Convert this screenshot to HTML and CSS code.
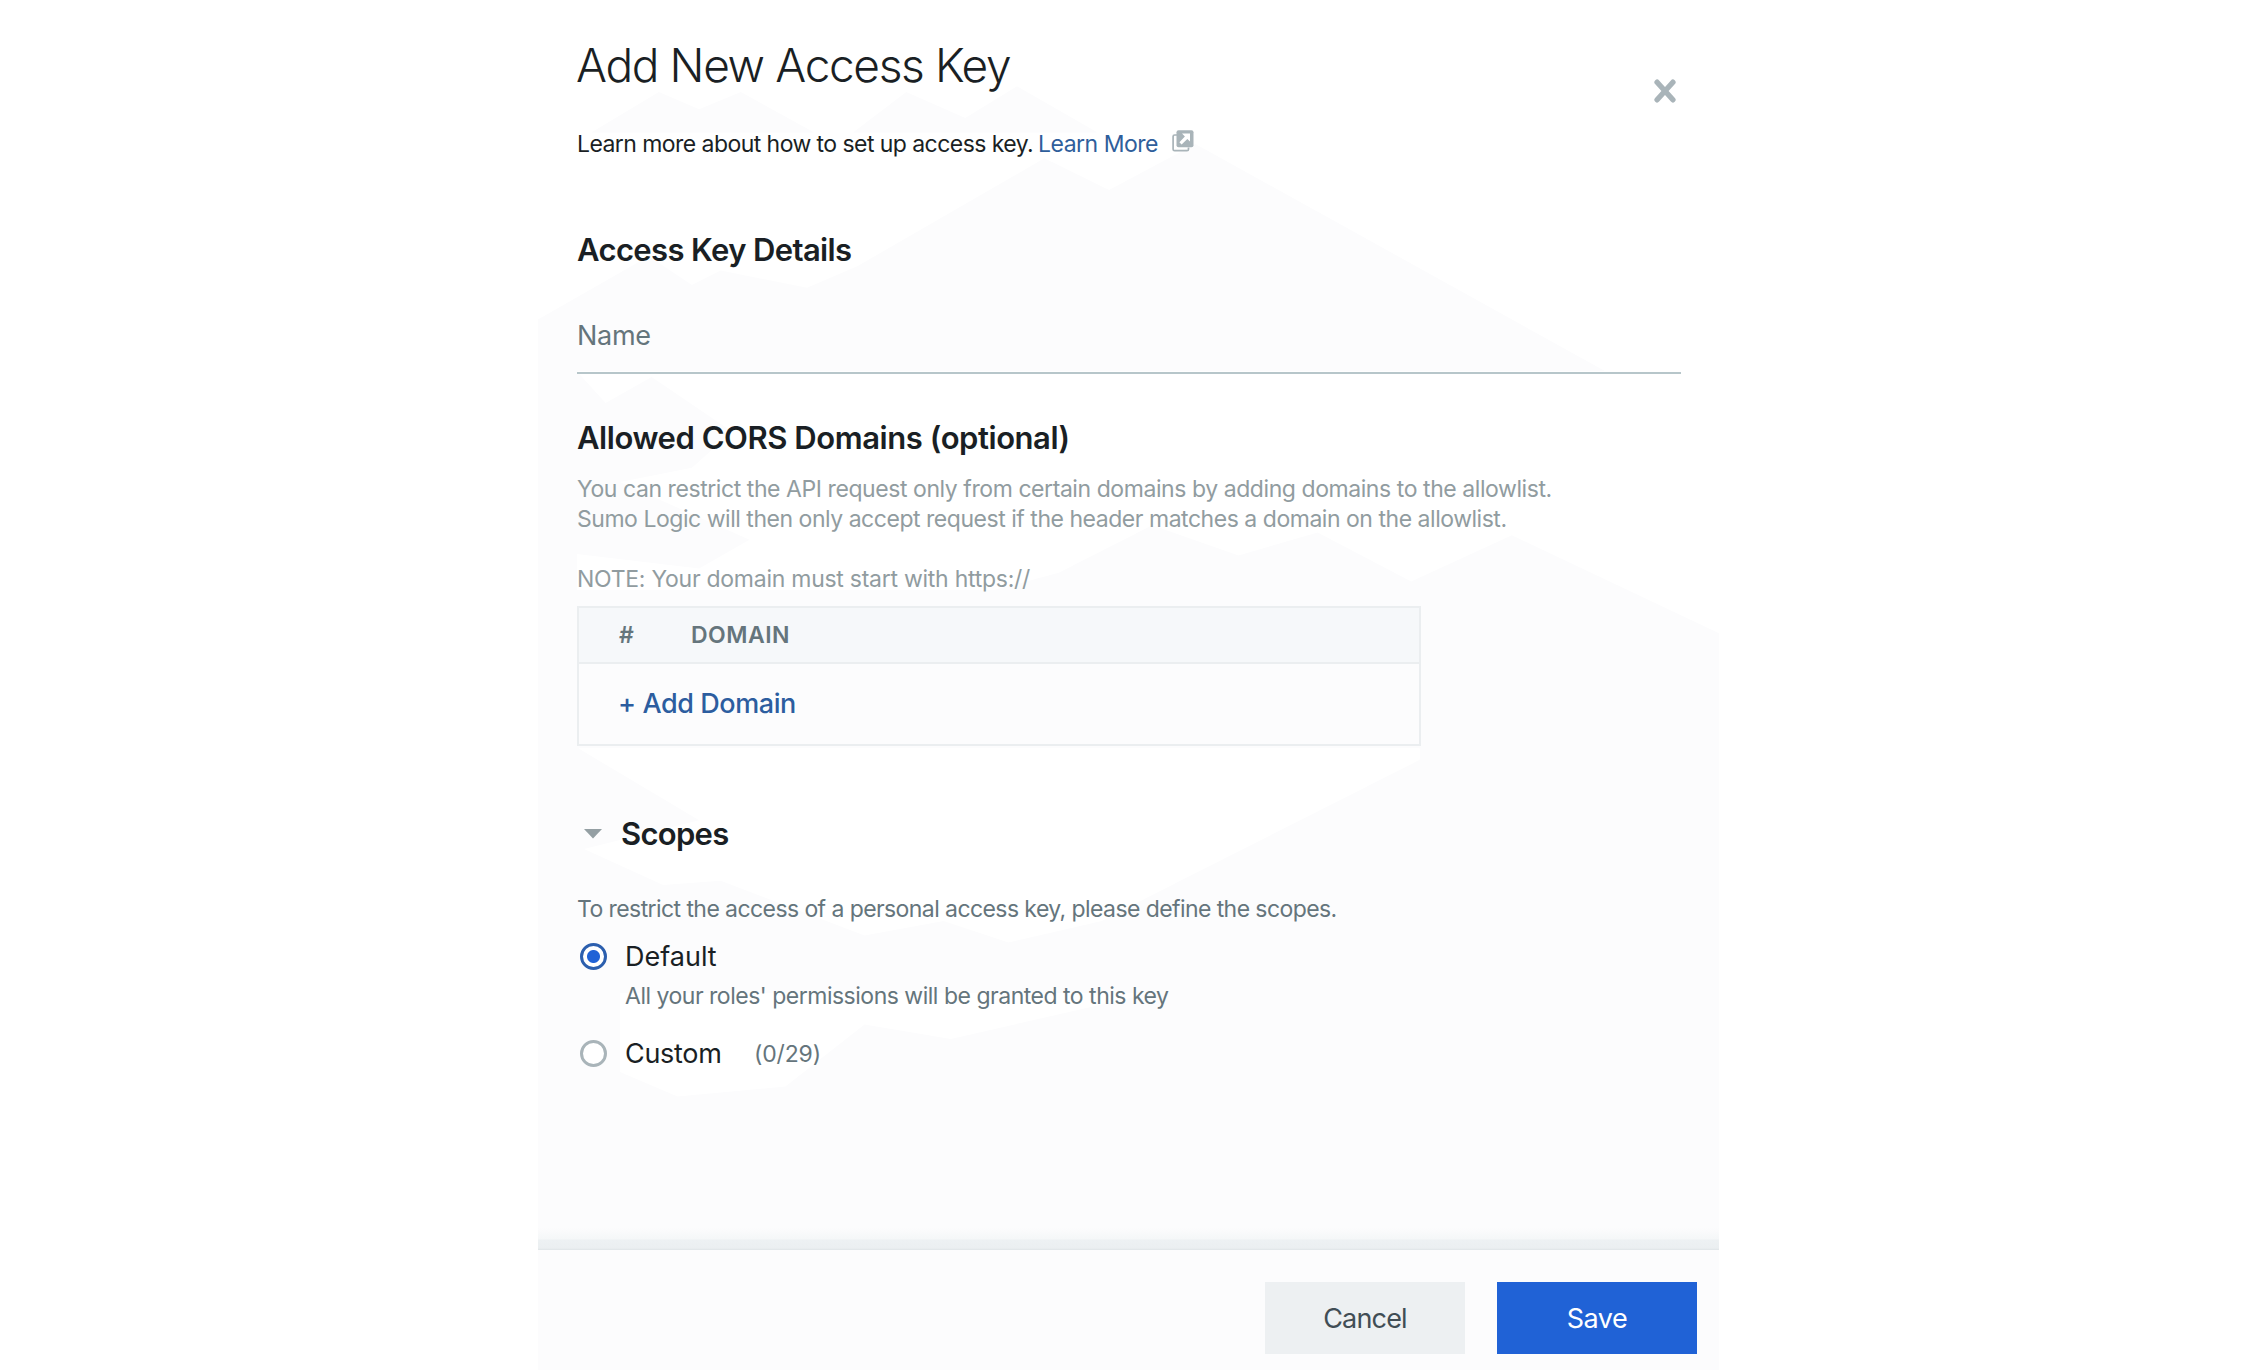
FILE: index.html
```html
<!DOCTYPE html>
<html lang="en">
<head>
<meta charset="utf-8">
<title>Add New Access Key</title>
<link rel="stylesheet" href="styles.css">
</head>
<body>
<main class="panel">
  <svg class="backdrop" viewBox="373 0 821 952" preserveAspectRatio="none" aria-hidden="true">
    <path fill="#fff" d="M373 0H1194V303L1115 258L830 100L770 132L725 110L595 185L560 200L500 188L480 198L450 178L373 222Z"/>
    <path fill="#fcfcfd" d="M410 92L457 64L485 76L514 64L565 92ZM592 92L629 64L670 82L706 60L762 92Z"/>
    <path fill="#fff" d="M400 258H1194V440L1050 372L980 404L915 370L860 386L800 365L735 398L690 410H400V385L485 395L520 375L430 335L480 325L508 300L452 262L420 280Z"/>
    <path fill="#fff" d="M401 520H986V528L800 622L765 640L700 655L655 640L600 650L500 612L460 615L405 590L485 570Z"/>
    <path fill="#fff" d="M430 690H800L660 722L600 712L545 755L470 762L430 745Z"/>
  </svg>

  <div class="content">
    <header class="head">
      <h1 class="title">Add New Access Key</h1>
      <button class="close" aria-label="Close">
        <svg width="22" height="24" viewBox="0 0 22 24"><path d="M3.1 3.2L18.9 20.8M18.9 3.2L3.1 20.8" fill="none" stroke="#a9b4b9" stroke-width="5.4" stroke-linecap="round"/></svg>
      </button>
    </header>

    <p class="intro"><span class="intro-text">Learn more about how to set up access key.</span><a class="learn">Learn More</a>
      <svg class="external" width="22" height="22" viewBox="0 0 22 22"><path d="M5 5H2.6Q1.1 5 1.1 6.5V19.2Q1.1 20.7 2.6 20.7H15Q16.5 20.7 16.5 19.2V17.5" fill="none" stroke="#a9b4b9" stroke-width="1.7"/><rect x="4.5" y=".3" width="17" height="17" rx="2" fill="#a9b4b9"/><path d="M10 3.6H18V11.6L15.3 8.9L9.6 14.4L7.4 12.2L12.9 6.5Z" fill="#fff"/></svg>
    </p>

    <h2 class="heading details">Access Key Details</h2>
    <div class="field">Name</div>

    <h2 class="heading cors">Allowed CORS Domains (optional)</h2>
    <div class="description">
      <p class="line-one">You can restrict the API request only from certain domains by adding domains to the allowlist.</p>
      <p class="line-two">Sumo Logic will then only accept request if the header matches a domain on the allowlist.</p>
      <p class="note">NOTE: Your domain must start with https://</p>
    </div>

    <div class="table">
      <div class="table-head"><span class="col-number">#</span><span class="col-domain">DOMAIN</span></div>
      <div class="table-body"><a class="add">+ Add Domain</a></div>
    </div>

    <div class="scopes">
      <svg class="caret" width="18" height="10" viewBox="0 0 18 10"><path d="M0 0H18L9 9.5Z" fill="#949fa3"/></svg>
      <h2 class="heading scopes-title">Scopes</h2>
    </div>
    <p class="scopes-text">To restrict the access of a personal access key, please define the scopes.</p>

    <label class="option"><span class="radio radio-on"></span><span class="option-name default">Default</span></label>
    <p class="option-text">All your roles' permissions will be granted to this key</p>
    <label class="option option-custom"><span class="radio"></span><span class="option-name custom">Custom</span><span class="count">(0/29)</span></label>
  </div>

  <div class="edge"></div>
  <footer class="footer">
    <button class="button cancel">Cancel</button>
    <button class="button save">Save</button>
  </footer>
</main>
</body>
</html>
```

FILE: styles.css
```css
* { box-sizing: border-box; }
body { margin: 0; background: #fff; font-family: Inter, "Liberation Sans", sans-serif; color: #1a1f24; }
h1, h2, p { margin: 0; white-space: nowrap; }
button { border: 0; padding: 0; background: none; font-family: inherit; }

.panel { position: relative; display: flex; flex-direction: column; width: 1181px; height: 1370px; margin-left: 538px; background: #fcfcfd; overflow: hidden; }
.backdrop { position: absolute; inset: 0; width: 100%; height: 100%; }
.content { position: relative; flex: 1; min-height: 0; padding: 37px 38px 0 39px; }

.head { display: flex; justify-content: space-between; height: 56px; }
.title { margin-left: -1px; font-size: 46px; font-weight: 340; line-height: 56px; letter-spacing: -1.37px; }
.close { height: 24px; width: 22px; margin: 42px 5px 0 0; }
.close svg { display: block; }

.intro { display: flex; height: 30px; margin-top: 36px; font-size: 23px; line-height: 30px; }
.intro-text { width: 461px; letter-spacing: -0.56px; }
.learn { width: 134px; color: #2f5e9b; letter-spacing: -0.5px; }
.external { margin-top: 1px; }

.heading { font-size: 31px; font-weight: 560; line-height: 40px; }
.details { margin-top: 71px; letter-spacing: -0.62px; }
.field { height: 56px; margin-top: 48px; border-bottom: 2px solid #b7c6ca; font-size: 27px; line-height: 36px; letter-spacing: -0.3px; color: #65757c; }
.cors { margin-top: 44px; letter-spacing: -0.44px; }

.description { margin-top: 16px; font-size: 23px; line-height: 30px; color: #919ca0; }
.line-one { letter-spacing: -0.43px; }
.line-two { letter-spacing: -0.47px; }
.note { margin-top: 30px; letter-spacing: -0.26px; }

.table { width: 844px; height: 140px; margin-top: 12px; border: 2px solid #ebeef0; }
.table-head { display: flex; height: 56px; padding-left: 40px; border-bottom: 2px solid #ebeef0; background: #f6f8fa; color: #65757c; font-size: 23px; font-weight: 640; line-height: 54px; }
.col-number { width: 72px; }
.col-domain { letter-spacing: 0.5px; }
.table-body { padding-left: 39px; line-height: 80px; }
.add { color: #2c5d9f; font-size: 27px; font-weight: 530; letter-spacing: -0.42px; }

.scopes { display: flex; align-items: center; gap: 19px; height: 40px; margin-top: 68px; padding-left: 7px; }
.scopes-title { letter-spacing: -0.72px; }
.scopes-text { margin-top: 40px; font-size: 23px; line-height: 30px; letter-spacing: -0.58px; color: #65757c; }
.option { display: flex; align-items: center; height: 36px; margin-top: 14px; padding-left: 3px; font-size: 27px; }
.radio { width: 27px; height: 27px; margin-right: 18px; border: 3px solid #a9b4b9; border-radius: 50%; background: #fff; }
.radio-on { border-color: #2c5fae; background: radial-gradient(circle, #2062d6 6px, #fff 7px); }
.custom { width: 129px; letter-spacing: -0.3px; }
.count { padding-top: 1px; font-size: 23px; letter-spacing: -0.17px; color: #65757c; }
.option-text { margin-top: 7px; padding-left: 48px; font-size: 23px; line-height: 30px; letter-spacing: -0.49px; color: #65757c; }
.option-custom { margin-top: 24px; }

.edge { position: relative; height: 22px; background: linear-gradient(#fcfcfd 0, #f5f7f8 11px, #edf1f3 12px, #ebeff1 20px, #dfe4e7 22px); }
.footer { position: relative; display: flex; justify-content: flex-end; gap: 32px; height: 120px; padding: 32px 22px 0 0; background: #fcfcfd; }
.button { width: 200px; height: 72px; padding-top: 1px; font-size: 27px; line-height: 71px; }
.cancel { background: #edf0f2; color: #414d55; letter-spacing: -0.83px; }
.save { background: #2062d6; color: #fff; letter-spacing: -0.5px; }
```
